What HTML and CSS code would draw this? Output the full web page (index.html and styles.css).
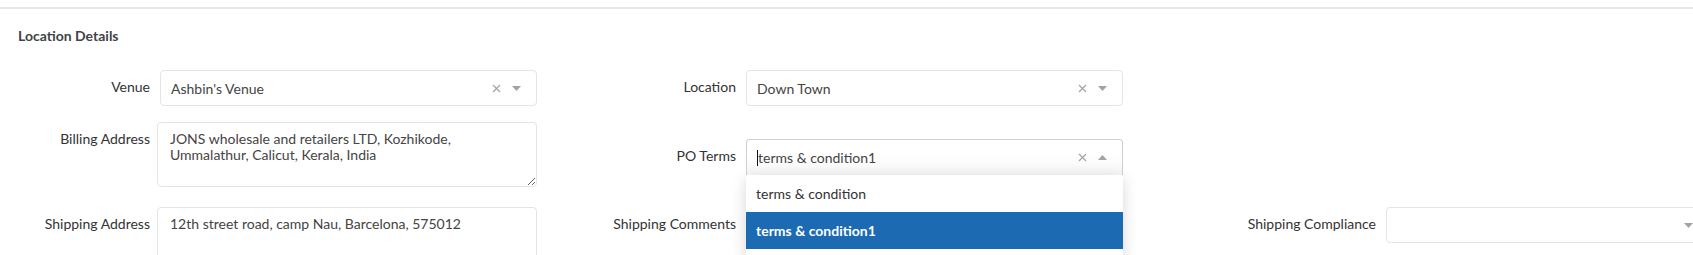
FILE: index.html
```html
<!DOCTYPE html>
<html lang="en">
  <head>
    <meta charset="UTF-8" />
    <meta name="viewport" content="width=device-width" />
    <title>Location Details</title>
    <link rel="stylesheet" href="styles.css">
  </head>
  <body>
    <div class="top-rule"></div>

    <section class="panel">
      <h4 class="panel-title">Location Details</h4>

      <!-- row 1 -->
      <div class="form-row row-first">
        <label class="field-label">Venue</label>
        <div class="select-box">
          <span class="select-value">Ashbin's Venue</span>
          <span class="select-clear"><svg width="9" height="9" viewBox="0 0 9 9"><path d="M1 1L8 8M8 1L1 8" stroke="#a3a3a3" stroke-width="1.2"/></svg></span>
          <span class="select-arrow"><svg width="9" height="5" viewBox="0 0 9 5"><path d="M0 0H9L4.5 5Z" fill="#a3a3a3"/></svg></span>
        </div>
        <label class="field-label">Location</label>
        <div class="select-box">
          <span class="select-value">Down Town</span>
          <span class="select-clear"><svg width="9" height="9" viewBox="0 0 9 9"><path d="M1 1L8 8M8 1L1 8" stroke="#a3a3a3" stroke-width="1.2"/></svg></span>
          <span class="select-arrow"><svg width="9" height="5" viewBox="0 0 9 5"><path d="M0 0H9L4.5 5Z" fill="#a3a3a3"/></svg></span>
        </div>
      </div>

      <!-- row 2 -->
      <div class="form-row row-second">
        <label class="field-label">Billing Address</label>
        <textarea class="text-box" readonly>JONS wholesale and retailers LTD, Kozhikode, Ummalathur, Calicut, Kerala, India</textarea>
        <label class="field-label shifted">PO Terms</label>
        <div class="select-wrap shifted">
          <div class="select-box open">
            <span class="caret"></span>
            <span class="select-value">terms &amp; condition1</span>
            <span class="select-clear"><svg width="9" height="9" viewBox="0 0 9 9"><path d="M1 1L8 8M8 1L1 8" stroke="#a3a3a3" stroke-width="1.2"/></svg></span>
            <span class="select-arrow"><svg width="9" height="5" viewBox="0 0 9 5"><path d="M0 5H9L4.5 0Z" fill="#a3a3a3"/></svg></span>
          </div>
          <ul class="select-menu">
            <li>terms &amp; condition</li>
            <li class="active">terms &amp; condition1</li>
          </ul>
        </div>
      </div>

      <!-- row 3 -->
      <div class="form-row">
        <label class="field-label">Shipping Address</label>
        <textarea class="text-box" readonly>12th street road, camp Nau, Barcelona, 575012</textarea>
        <label class="field-label">Shipping Comments</label>
        <textarea class="text-box plain" readonly></textarea>
        <label class="field-label">Shipping Compliance</label>
        <div class="select-box">
          <span class="select-value"></span>
          <span class="select-arrow"><svg width="9" height="5" viewBox="0 0 9 5"><path d="M0 0H9L4.5 5Z" fill="#a3a3a3"/></svg></span>
        </div>
      </div>
    </section>
  </body>
</html>
```

FILE: styles.css
```css
body {
  margin: 0;
  padding: 0;
  width: 100%;
  overflow: hidden;
  background-color: #ffffff;
  font-family: Lato, "Open Sans", Arial, sans-serif;
  font-size: 14px;
  color: #333;
}

.top-rule {
  height: 7px;
  border-bottom: 2px solid #e8e8e8;
}

.panel-title {
  margin: 0;
  padding: 18px 0 0 18px;
  height: 43px;
  box-sizing: border-box;
  font-size: 14px;
  font-weight: bold;
  color: #404448;
  line-height: 17px;
}

.form-row {
  display: grid;
  grid-template-columns: 160px 377px 209px 377px 263px 323px;
  align-items: start;
}

.row-first {
  margin-top: 18px;
}

.row-second {
  margin-top: 16px;
}

.row-second + .form-row {
  margin-top: 20px;
}

.field-label {
  text-align: right;
  padding: 8px 10px 0 0;
  line-height: 17px;
  color: #333;
  white-space: nowrap;
}

.shifted {
  margin-top: 17px;
}

.select-wrap {
  position: relative;
}

.select-box {
  position: relative;
  display: flex;
  align-items: center;
  height: 36px;
  box-sizing: border-box;
  border: 1px solid #e4e4e4;
  border-radius: 4px;
  background: #fff;
  padding: 0 11px 0 10px;
  color: #444;
}

.select-box.open {
  height: 37px;
  border-color: #cfcfcf;
  border-bottom-color: transparent;
  border-radius: 4px 4px 0 0;
  background: linear-gradient(to bottom, #ffffff 40%, #f6f6f6 100%);
}

.select-value {
  flex-grow: 1;
  line-height: 17px;
  white-space: nowrap;
}

.caret {
  width: 1px;
  height: 16px;
  background: #111;
}

.select-clear {
  display: flex;
  margin-right: 11px;
}

.select-arrow {
  display: flex;
  margin-right: 4px;
}

.select-menu {
  position: absolute;
  top: 36px;
  left: 0;
  right: 0;
  margin: 0;
  padding: 0 0 12px 0;
  list-style: none;
  background: #fff;
  box-shadow: 0 4px 14px rgba(0, 0, 0, 0.16);
  z-index: 5;
}

.select-menu li {
  padding: 10px 10px;
  line-height: 17px;
  color: #333;
}

.select-menu li.active {
  background-color: #1b6ab2;
  color: #fff;
  font-weight: bold;
}

.text-box {
  display: block;
  margin: 0 0 0 -3px;
  width: calc(100% + 3px);
  height: 65px;
  box-sizing: border-box;
  border: 1px solid #e4e4e4;
  border-radius: 4px;
  padding: 8px 12px;
  font-family: Lato, "Open Sans", Arial, sans-serif;
  font-size: 14px;
  line-height: 16px;
  color: #444;
  resize: vertical;
  outline: none;
}

.text-box.plain {
  margin-left: 0;
  width: 100%;
}
```
